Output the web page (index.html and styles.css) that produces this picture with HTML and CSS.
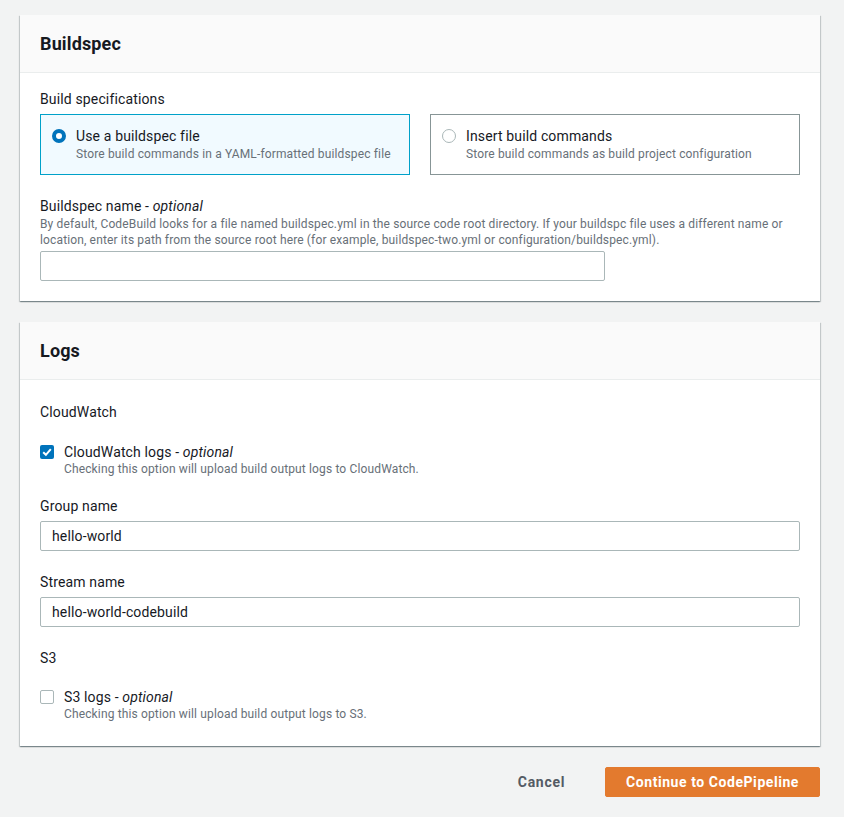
FILE: index.html
```html
<!DOCTYPE html>
<html lang="en">
<head>
    <meta charset="UTF-8">
    <meta name="viewport" content="width=device-width, initial-scale=1.0">
    <title>Create build project</title>
    <link rel="stylesheet" href="styles.css">
</head>
<body>
    <div class="page">
        <!-- Buildspec -->
        <div class="panel">
            <div class="panel-header">
                <h2>Buildspec</h2>
            </div>
            <div class="panel-body">
                <div class="field">
                    <div class="field-label">Build specifications</div>
                    <div class="tiles">
                        <label class="tile selected">
                            <span class="radio checked"></span>
                            <span class="tile-text">
                                <span class="tile-title">Use a buildspec file</span>
                                <span class="tile-desc">Store build commands in a YAML-formatted buildspec file</span>
                            </span>
                        </label>
                        <label class="tile">
                            <span class="radio"></span>
                            <span class="tile-text">
                                <span class="tile-title">Insert build commands</span>
                                <span class="tile-desc">Store build commands as build project configuration</span>
                            </span>
                        </label>
                    </div>
                </div>

                <div class="field">
                    <div class="field-label">Buildspec name - <i>optional</i></div>
                    <div class="field-desc">By default, CodeBuild looks for a file named buildspec.yml in the source code root directory. If your buildspc file uses a different name or location, enter its path from the source root here (for example, buildspec-two.yml or configuration/buildspec.yml).</div>
                    <input class="text-input short" type="text" value="">
                </div>
            </div>
        </div>

        <!-- Logs -->
        <div class="panel">
            <div class="panel-header">
                <h2>Logs</h2>
            </div>
            <div class="panel-body">
                <div class="group-title">CloudWatch</div>

                <div class="check-row">
                    <span class="checkbox checked">
                        <svg width="14" height="14" viewBox="0 0 14 14"><path d="M3.2 7.2 L5.9 9.8 L10.8 4.2" fill="none" stroke="#fff" stroke-width="2"/></svg>
                    </span>
                    <span class="check-text">
                        <span class="check-title">CloudWatch logs - <i>optional</i></span>
                        <span class="check-desc">Checking this option will upload build output logs to CloudWatch.</span>
                    </span>
                </div>

                <div class="field">
                    <div class="field-label">Group name</div>
                    <input class="text-input" type="text" value="hello-world">
                </div>

                <div class="field">
                    <div class="field-label">Stream name</div>
                    <input class="text-input" type="text" value="hello-world-codebuild">
                </div>

                <div class="group-title s3">S3</div>

                <div class="check-row">
                    <span class="checkbox"></span>
                    <span class="check-text">
                        <span class="check-title">S3 logs - <i>optional</i></span>
                        <span class="check-desc">Checking this option will upload build output logs to S3.</span>
                    </span>
                </div>
            </div>
        </div>

        <div class="actions">
            <button class="btn-link" type="button">Cancel</button>
            <button class="btn-primary" type="button">Continue to CodePipeline</button>
        </div>
    </div>
</body>
</html>
```

FILE: styles.css
```css
/* Base */
body {
    margin: 0;
    background-color: #f2f3f3;
    color: #16191f;
    font-family: Roboto, "Noto Sans", sans-serif;
    font-size: 14px;
    line-height: 20px;
    letter-spacing: 0.01em;
}

.page {
    padding: 15px 24px 21px 20px;
    display: flex;
    flex-direction: column;
    gap: 21px;
}

/* Panels */
.panel {
    background-color: #fff;
    box-shadow: 0 1px 1px 0 rgba(0, 28, 36, 0.3),
        1px 1px 1px 0 rgba(0, 28, 36, 0.15),
        -1px 1px 1px 0 rgba(0, 28, 36, 0.15);
}

.panel-header {
    background-color: #fafafa;
    border-bottom: 1px solid #eaeded;
    padding: 19px 20px 18px;
}

.panel-header h2 {
    margin: 0;
    font-size: 18px;
    line-height: 20px;
    font-weight: 700;
}

.panel-body {
    padding: 16px 20px 20px;
}

/* Fields */
.field {
    margin-bottom: 21px;
}

.panel-body > .field:last-child {
    margin-bottom: 0;
}

.field-label {
    font-size: 14px;
    line-height: 20px;
    margin-bottom: 5px;
}

.field-label:has(+ .field-desc) {
    margin-bottom: 0;
}

.field-desc {
    font-size: 12px;
    line-height: 16px;
    color: #687078;
    margin-bottom: 3px;
}

.text-input {
    display: block;
    box-sizing: border-box;
    width: 100%;
    height: 30px;
    margin: 0;
    padding: 0 11px;
    border: 1px solid #aab7b8;
    border-radius: 2px;
    font-family: inherit;
    font-size: 14px;
    letter-spacing: inherit;
    color: #16191f;
    background-color: #fff;
}

.text-input.short {
    width: 565px;
}

/* Tiles */
.tiles {
    display: grid;
    grid-template-columns: 1fr 1fr;
    gap: 20px;
}

.tile {
    display: flex;
    gap: 10px;
    height: 61px;
    box-sizing: border-box;
    padding: 11px 11px 10px;
    border: 1px solid #879596;
}

.tile.selected {
    background-color: #f1faff;
    border-color: #00a1c9;
}

.radio {
    flex: none;
    box-sizing: border-box;
    width: 14px;
    height: 14px;
    margin-top: 3px;
    border: 1px solid #aab7b8;
    border-radius: 50%;
    background-color: #fff;
}

.radio.checked {
    border: 4px solid #0073bb;
}

.tile-text,
.check-text {
    display: flex;
    flex-direction: column;
}

.tile-title,
.check-title {
    font-size: 14px;
    line-height: 20px;
}

.tile-desc,
.check-desc {
    font-size: 12px;
    line-height: 16px;
    color: #687078;
}

.check-desc {
    margin-top: -1px;
}

/* Checkbox groups */
.group-title {
    font-size: 14px;
    line-height: 20px;
    margin: 6px 0 20px;
}

.group-title.s3 {
    margin: 0 0 19px;
}

.check-row {
    display: flex;
    gap: 10px;
    margin-bottom: 19px;
}

.panel-body > .check-row:last-child {
    margin-bottom: 4px;
}

.checkbox {
    flex: none;
    box-sizing: border-box;
    width: 14px;
    height: 14px;
    margin-top: 3px;
    border: 1px solid #aab7b8;
    border-radius: 2px;
    background-color: #fff;
    display: flex;
}

.checkbox.checked {
    border: none;
    background-color: #0073bb;
}

/* Actions */
.actions {
    display: flex;
    justify-content: flex-end;
    align-items: center;
    gap: 20px;
}

.btn-link {
    background: none;
    border: none;
    padding: 4px 20px;
    font-family: inherit;
    font-size: 14px;
    font-weight: 700;
    letter-spacing: 0.05em;
    color: #545b64;
    cursor: pointer;
}

.btn-primary {
    height: 30px;
    padding: 0 20px;
    background-color: #e37a2e;
    border: 1px solid #e37a2e;
    border-radius: 2px;
    font-family: inherit;
    font-size: 14px;
    font-weight: 700;
    letter-spacing: 0.04em;
    color: #fff;
    cursor: pointer;
}
```
